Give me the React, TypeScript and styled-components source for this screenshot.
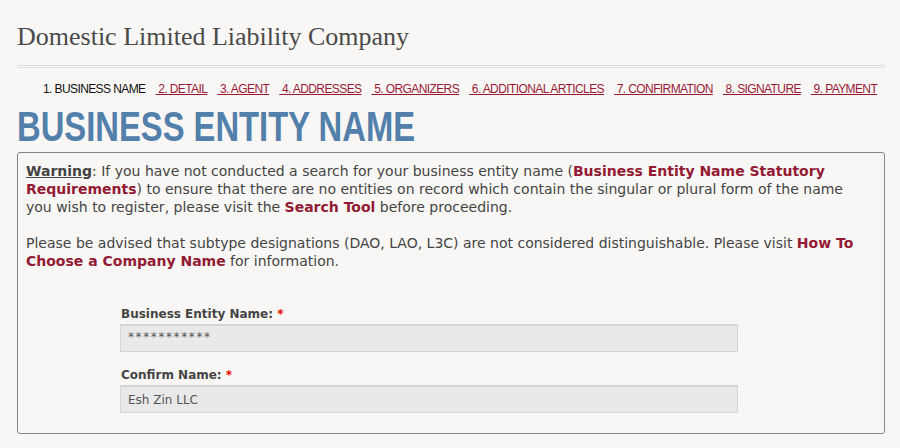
import React from 'react';
import styled, { createGlobalStyle } from 'styled-components';

const GlobalStyle = createGlobalStyle({
  body: {
    backgroundColor: '#f8f7f5',
    margin: 0,
  },
});

const Page = styled.div({
  padding: '0 15px 0 17px',
  width: 868,
});

const Title = styled.h1({
  color: '#4a4a4a',
  fontFamily: '"Liberation Serif", "DejaVu Serif", serif',
  fontSize: 26,
  fontWeight: 400,
  lineHeight: '30px',
  margin: 0,
  padding: '22px 0 13px',
});

const Rule = styled.div({
  borderBottom: '1px solid #e4e3e1',
  borderTop: '1px solid #dcdbd9',
  height: 1,
});

const Steps = styled.nav({
  alignItems: 'center',
  display: 'flex',
  fontFamily: '"Liberation Sans", Arial, sans-serif',
  fontSize: 12,
  gap: 10,
  height: 20,
  letterSpacing: '-0.6px',
  marginTop: 11,
  paddingLeft: 26,
});

const Step = styled.a<{ $active?: boolean }>((props) => ({
  color: props.$active ? '#111' : '#9a1a35',
  cursor: 'pointer',
  textDecoration: props.$active ? 'none' : 'underline',
  whiteSpace: 'pre',
}));

const Heading = styled.h2({
  color: '#5280ab',
  fontFamily: '"Liberation Sans Narrow", "Arial Narrow", "Liberation Sans", sans-serif',
  fontSize: 42,
  fontWeight: 700,
  lineHeight: '44px',
  margin: 0,
  padding: '6px 0 3px',
});

// no narrow face installed, so the bold face is squeezed to Arial Narrow's width
const HeadingText = styled.span({
  display: 'inline-block',
  transform: 'scaleX(0.78)',
  transformOrigin: 'left center',
  whiteSpace: 'nowrap',
});

const Panel = styled.section({
  border: '1px solid #858585',
  borderRadius: 3,
  color: '#444',
  fontFamily: '"DejaVu Sans", Verdana, sans-serif',
  fontSize: 14,
  lineHeight: '18px',
  padding: '9px 14px 20px 8px',
});

const Para = styled.p({
  margin: '0 0 18px',
});

const Strong = styled.strong({
  color: '#444',
  textDecoration: 'underline',
});

const Link = styled.a({
  color: '#931a33',
  cursor: 'pointer',
  fontWeight: 700,
  textDecoration: 'none',
});

const Form = styled.div({
  display: 'flex',
  flexDirection: 'column',
  gap: 14,
  paddingLeft: 94,
  paddingTop: 17,
});

const Field = styled.label({
  display: 'flex',
  flexDirection: 'column',
  gap: 1,
  width: 618,
});

const Label = styled.span({
  color: '#444',
  fontSize: 12,
  fontWeight: 700,
  paddingLeft: 1,
});

const Required = styled.span({
  color: '#e00',
});

const Input = styled.input<{ $masked?: boolean }>((props) => ({
  backgroundColor: '#e9e9e9',
  border: '1px solid #d5d5d5',
  borderTopWidth: 2,
  boxSizing: 'border-box',
  color: '#555',
  fontFamily: '"DejaVu Sans", Verdana, sans-serif',
  fontSize: 12,
  height: 28,
  letterSpacing: props.$masked ? '1.6px' : 'normal',
  margin: 0,
  outline: 'none',
  padding: props.$masked ? '0 7px 4px' : '0 7px',
  width: '100%',
}));

const steps = [
  '2. DETAIL',
  '3. AGENT',
  '4. ADDRESSES',
  '5. ORGANIZERS',
  '6. ADDITIONAL ARTICLES',
  '7. CONFIRMATION',
  '8. SIGNATURE',
  '9. PAYMENT',
];

const App: React.FC = () => {
  return (
    <Page>
      <GlobalStyle />
      <Title>Domestic Limited Liability Company</Title>
      <Rule />
      <Steps>
        <Step $active>1. BUSINESS NAME</Step>
        {steps.map((s) => (
          <Step key={s}>{` ${s}`}</Step>
        ))}
      </Steps>
      <Heading>
        <HeadingText>BUSINESS ENTITY NAME</HeadingText>
      </Heading>
      <Panel>
        <Para>
          <Strong>Warning</Strong>: If you have not conducted a search for your business entity name
          (<Link>Business Entity Name Statutory Requirements</Link>) to ensure that there are no
          entities on record which contain the singular or plural form of the name you wish to
          register, please visit the <Link>Search Tool</Link> before proceeding.
        </Para>
        <Para>
          Please be advised that subtype designations (DAO, LAO, L3C) are not considered
          distinguishable. Please visit <Link>How To Choose a Company Name</Link> for information.
        </Para>
        <Form>
          <Field>
            <Label>
              Business Entity Name: <Required>*</Required>
            </Label>
            <Input $masked type="text" defaultValue="***********" />
          </Field>
          <Field>
            <Label>
              Confirm Name: <Required>*</Required>
            </Label>
            <Input type="text" defaultValue="Esh Zin LLC" />
          </Field>
        </Form>
      </Panel>
    </Page>
  );
};

export default App;
